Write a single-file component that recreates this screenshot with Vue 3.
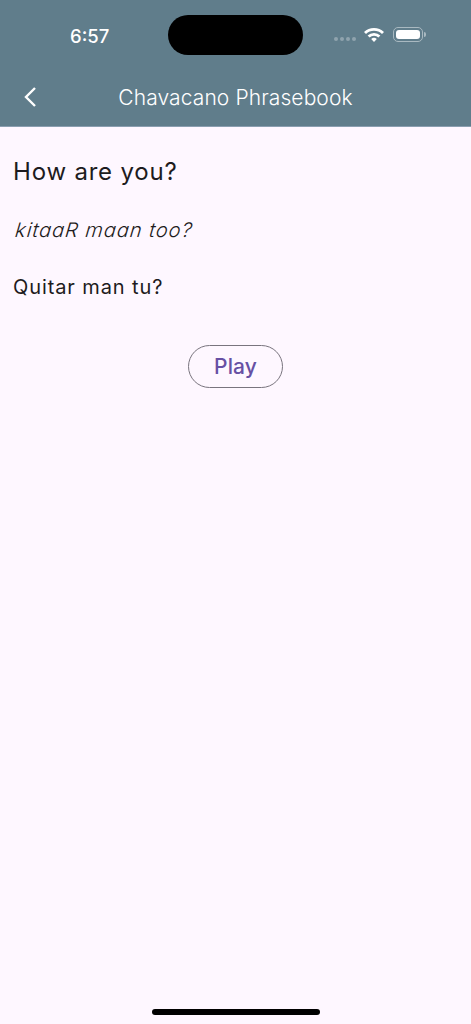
<script setup>
const phrase = {
  english: 'How are you?',
  phonetic: 'kitaaR maan too?',
  chavacano: 'Quitar man tu?',
};
</script>

<template>
  <div class="screen">
    <header class="appbar">
      <div class="status">
        <span class="time">6:57</span>
        <div class="island"></div>
        <div class="status-icons">
          <div class="dots"><i></i><i></i><i></i><i></i></div>
          <svg class="wifi" width="20" height="15" viewBox="0 0 20 15">
            <path d="M0 5a14.2 14.2 0 0 1 20 0l-2 2a11.4 11.4 0 0 0-16 0z" fill="#fff" />
            <path d="M3.6 8.6a9 9 0 0 1 12.8 0l-2 2a6.2 6.2 0 0 0-8.8 0z" fill="#fff" />
            <path d="M7.2 12.1a4 4 0 0 1 5.6 0L10 15z" fill="#fff" />
          </svg>
          <div class="battery"><div class="level"></div></div>
          <div class="nub"></div>
        </div>
      </div>
      <div class="nav">
        <svg class="back" width="16" height="22" viewBox="0 0 16 22">
          <path d="M13 2 L4 11 L13 20" fill="none" stroke="#fff" stroke-width="2.4" />
        </svg>
        <span class="title">Chavacano Phrasebook</span>
      </div>
    </header>

    <main class="content">
      <p class="english">{{ phrase.english }}</p>
      <p class="phonetic">{{ phrase.phonetic }}</p>
      <p class="chavacano">{{ phrase.chavacano }}</p>
      <div class="actions">
        <button class="play" type="button">Play</button>
      </div>
    </main>

    <div class="home-bar"><div class="indicator"></div></div>
  </div>
</template>

<style>
html,
body {
  margin: 0;
  background: #fef7ff;
}
</style>

<style scoped>
.screen {
  width: 471px;
  height: 1024px;
  display: flex;
  flex-direction: column;
  background: #fef7ff;
  font-family: Inter, Roboto, sans-serif;
  overflow: hidden;
}
.appbar {
  height: 126px;
  background: #607d8b;
  color: #fff;
  border-bottom: 1px solid #8a9eb0;
}
.status {
  height: 70px;
  display: flex;
  align-items: center;
  position: relative;
  padding-left: 70px;
}
.time {
  font-size: 18.5px;
  font-weight: 500;
  margin-top: 1px;
}
.island {
  position: absolute;
  left: 168px;
  top: 15px;
  width: 135px;
  height: 40px;
  border-radius: 20px;
  background: #000;
}
.status-icons {
  position: absolute;
  left: 334px;
  top: 27px;
  display: flex;
  align-items: center;
}
.dots {
  display: flex;
  gap: 2px;
  margin-top: 9px;
  margin-right: 8px;
}
.dots i {
  width: 4px;
  height: 4px;
  border-radius: 50%;
  background: #8fa3ae;
}
.wifi {
  margin-right: 9px;
}
.battery {
  width: 30px;
  height: 15px;
  box-sizing: border-box;
  border: 1px solid #a9b9c1;
  border-radius: 5px;
  padding: 2px;
}
.level {
  height: 100%;
  background: #fff;
  border-radius: 3px;
}
.nub {
  width: 2px;
  height: 5px;
  margin-left: 1px;
  background: #a9b9c1;
  border-radius: 0 2px 2px 0;
}
.nav {
  height: 56px;
  position: relative;
  display: flex;
  align-items: center;
  justify-content: center;
}
.back {
  position: absolute;
  left: 22px;
  top: 16px;
}
.title {
  font-size: 21px;
  font-weight: 300;
  letter-spacing: 0.1px;
  margin-top: -2px;
}
.content {
  flex: 1;
  padding: 0 14px;
  color: #1d1b20;
}
.content p {
  margin: 0;
}
.english {
  margin-top: 29px !important;
  font-size: 24px;
  line-height: 32px;
  letter-spacing: 0.8px;
  font-weight: 400;
  margin-left: -1px !important;
}
.phonetic {
  margin-top: 30px !important;
  font-size: 20px;
  line-height: 24px;
  font-style: italic;
  font-weight: 300;
  letter-spacing: 0.95px;
  transform: skewX(-7deg);
  transform-origin: left bottom;
}
.chavacano {
  margin-top: 33px !important;
  font-size: 20px;
  line-height: 24px;
  letter-spacing: 0.9px;
  font-weight: 400;
  margin-left: -1px !important;
}
.actions {
  margin-top: 46px;
  display: flex;
  justify-content: center;
}
.play {
  width: 95px;
  height: 43px;
  padding: 0;
  border: 1px solid #79747e;
  border-radius: 22px;
  background: transparent;
  color: #6750a4;
  font-family: inherit;
  font-size: 21px;
  font-weight: 500;
  letter-spacing: 0.1px;
}
.home-bar {
  height: 24px;
  display: flex;
  justify-content: center;
}
.indicator {
  width: 168px;
  height: 6px;
  border-radius: 3px;
  background: #000;
  margin-top: 9px;
}
</style>
